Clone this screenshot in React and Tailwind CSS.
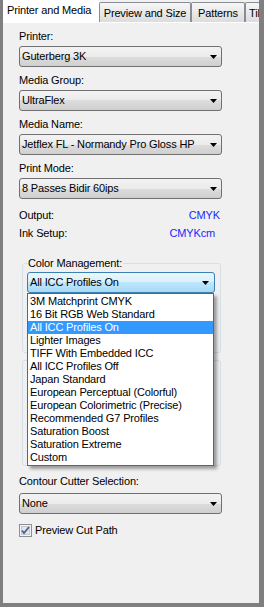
import React from 'react';

const plain =
  'border-[#707070] bg-[linear-gradient(#f3f3f3_0%,#ebebeb_50%,#dddddd_50%,#cfcfcf_100%)]';
const focused =
  'border-[#3c7fb1] bg-[linear-gradient(#eaf6fd_0%,#d9f0fc_50%,#bee6fd_50%,#a7d9f5_100%)]';

const Arrow = () => (
  <svg width="7" height="4" viewBox="0 0 7 4" className="shrink-0">
    <path d="M0 0h7L3.5 4z" fill="#000" />
  </svg>
);

const Combo = ({ value, active, className = '' }) => (
  <div
    className={`flex h-[21px] items-center rounded-[3px] border pl-[2px] ${
      active ? focused + ' pr-[4px]' : plain + ' pr-[4px]'
    } ${className}`}
  >
    <span className="min-w-0 flex-1 overflow-hidden whitespace-nowrap">{value}</span>
    <span className="ml-[12px] flex w-[8px] justify-center">
      <Arrow />
    </span>
  </div>
);

const Label = ({ children, className = '' }) => (
  <div className={`h-[13px] whitespace-nowrap ${className}`}>{children}</div>
);

const Tab = ({ children, className = '' }) => (
  <div
    className={`flex h-[20px] shrink-0 items-center justify-center overflow-hidden whitespace-nowrap rounded-t-[2px] border border-b-0 border-[#898c95] bg-[linear-gradient(#f6f6f6,#dcdcdc)] pt-[1px] ${className}`}
  >
    {children}
  </div>
);

const profiles = [
  '3M Matchprint CMYK',
  '16 Bit RGB Web Standard',
  'All ICC Profiles On',
  'Lighter Images',
  'TIFF With Embedded ICC',
  'All ICC Profiles Off',
  'Japan Standard',
  'European Perceptual (Colorful)',
  'European Colorimetric (Precise)',
  'Recommended G7 Profiles',
  'Saturation Boost',
  'Saturation Extreme',
  'Custom',
];

export default function App() {
  return (
    <div className="h-[607px] w-[264px] bg-[#7f7f7f] pb-[4px] pl-[3px] pr-[5px] font-['Liberation_Sans',Arial,sans-serif] text-[11px] leading-[13px] tracking-[-0.15px] text-black">
      <div className="flex h-full flex-col overflow-hidden bg-[#f0f0f0]">
        {/* tabs */}
        <div className="flex h-[22px] shrink-0 items-end">
          <div className="h-[22px] w-[96px] shrink-0 whitespace-nowrap bg-white pl-[4px] pt-[4px]">
            Printer and Media
          </div>
          <Tab className="w-[92px]">Preview and Size</Tab>
          <Tab className="w-[54px]">Patterns</Tab>
          <Tab className="w-[40px] justify-start pl-[3px]">Tiling</Tab>
        </div>

        {/* page body */}
        <div className="flex flex-1 flex-col border-t border-white pl-[16px] pt-[7px]">
          <Label className="mb-[3px]">Printer:</Label>
          <Combo value="Guterberg 3K" className="w-[203px]" />

          <Label className="mb-[3px] mt-[7px]">Media Group:</Label>
          <Combo value="UltraFlex" className="w-[203px]" />

          <Label className="mb-[3px] mt-[7px]">Media Name:</Label>
          <Combo value="Jetflex FL - Normandy Pro Gloss HP L:" className="w-[203px]" />

          <Label className="mb-[3px] mt-[7px]">Print Mode:</Label>
          <Combo value="8 Passes Bidir 60ips" className="w-[203px]" />

          <div className="mt-[10px] flex h-[13px] w-[201px] justify-between">
            <span>Output:</span>
            <span className="text-[#1f1fff]">CMYK</span>
          </div>
          <div className="mt-[5px] flex h-[13px] w-[196px] justify-between">
            <span>Ink Setup:</span>
            <span className="text-[#1f1fff]">CMYKcm</span>
          </div>

          {/* Color Management group */}
          <div className="relative ml-[3px] mt-[23px] h-[90px] w-[199px] rounded-[3px] border border-[#d5dfe5] pl-[4px] pt-[8px]">
            <span className="absolute -top-[7px] left-[4px] bg-[#f0f0f0] px-[1px]">
              Color Management:
            </span>
            <div className="relative w-[188px]">
              <Combo value="All ICC Profiles On" active className="w-[188px] pr-[5px]" />
              <div className="absolute left-0 top-full z-10 w-[187px] border border-[#646464] bg-white py-[1px] shadow-[3px_3px_3px_rgba(0,0,0,0.35)]">
                {profiles.map((p) => (
                  <div
                    key={p}
                    className={`h-[13px] whitespace-nowrap pl-[2px] ${
                      p === 'All ICC Profiles On' ? 'bg-[#3399ff] text-white' : ''
                    }`}
                  >
                    {p}
                  </div>
                ))}
              </div>
            </div>
          </div>

          <div className="ml-[3px] mt-[7px] h-[106px] w-[199px] rounded-[3px] border border-[#d5dfe5]" />

          <Label className="mb-[5px] mt-[9px]">Contour Cutter Selection:</Label>
          <Combo value="None" className="w-[203px]" />

          <div className="mt-[10px] flex items-center gap-[3px]">
            <svg width="13" height="13" viewBox="0 0 13 13" className="shrink-0">
              <rect x="0.5" y="0.5" width="12" height="12" fill="#f4f4f4" stroke="#8f8f8f" />
              <rect x="2.5" y="2.5" width="8" height="8" fill="#e4e6ea" stroke="#c4c8d0" />
              <path
                d="M3 6.5l2 2.5L10 3"
                fill="none"
                stroke="#4a5f97"
                strokeWidth="1.8"
              />
            </svg>
            <span>Preview Cut Path</span>
          </div>
        </div>
      </div>
    </div>
  );
}
